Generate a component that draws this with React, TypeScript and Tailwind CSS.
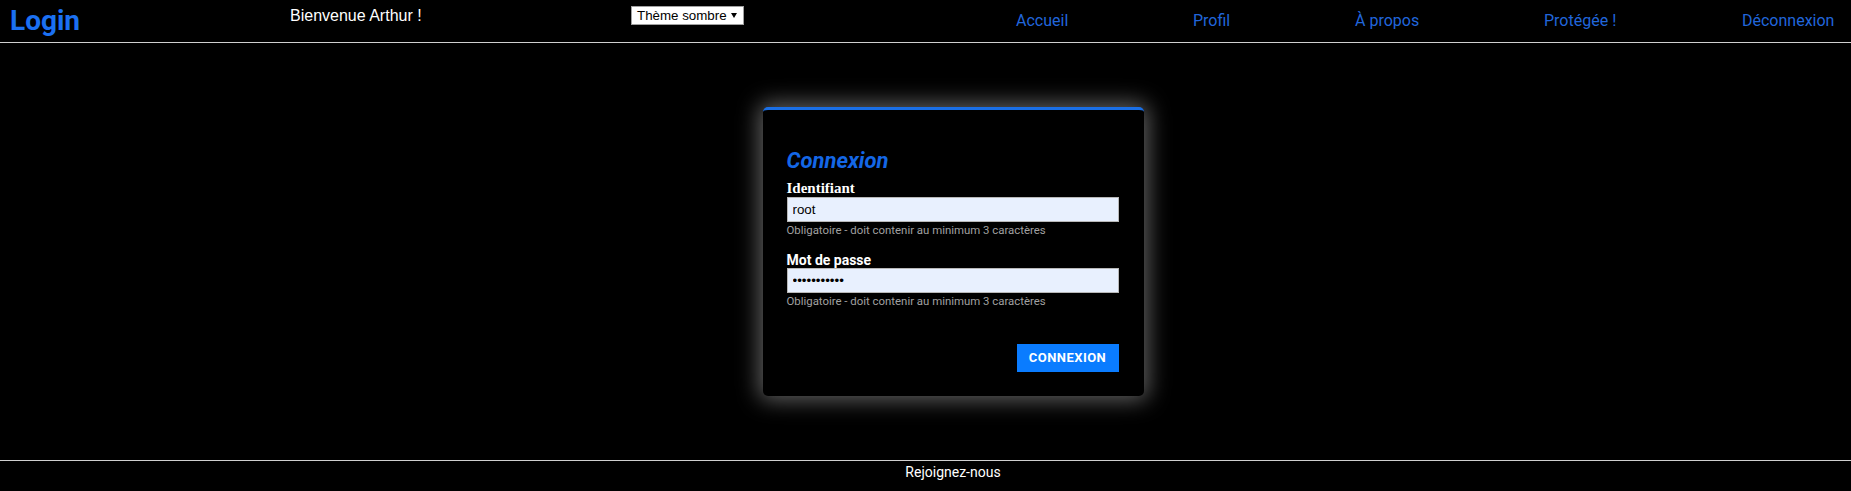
import { useState } from 'react';

const navLinks = [
  { label: 'Accueil', width: 'w-[177px]' },
  { label: 'Profil', width: 'w-[162px]' },
  { label: 'À propos', width: 'w-[189px]' },
  { label: 'Protégée !', width: 'w-[198px]' },
  { label: 'Déconnexion', width: '' },
];

const hint = 'Obligatoire - doit contenir au minimum 3 caractères';

export default function App() {
  const [login, setLogin] = useState('root');
  const [password, setPassword] = useState('12345678901');

  return (
    <div className="h-[491px] overflow-hidden bg-black flex flex-col font-['Roboto',sans-serif]">
      {/* header */}
      <header className="h-[43px] shrink-0 border-b border-[#d0d0d0] flex items-start">
        <div className="w-[290px] pl-[10px] pt-[6px] text-[28px] leading-[30px] font-bold text-[#1b70f2]">
          Login
        </div>
        <div className="w-[341px] pt-[7px] text-[16px] leading-[18px] text-white font-['Liberation_Sans',sans-serif]">
          Bienvenue Arthur !
        </div>
        <div className="mt-[6px] w-[113px] h-[19px] bg-white border border-[#a0a0a0] flex items-center pl-[5px] pr-[6px] justify-between">
          <span className="text-[13.33px] leading-none text-black font-['Liberation_Sans',sans-serif]">Thème sombre</span>
          <svg width="6" height="5" viewBox="0 0 6 5" className="mt-[-1px]">
            <path d="M0 0 H6 L3 5 Z" fill="#000" />
          </svg>
        </div>
        <nav className="ml-[272px] flex pt-[11px]">
          {navLinks.map((l) => (
            <a key={l.label} href="#" className={`${l.width} text-[16px] leading-[20px] text-[#2166db]`}>
              {l.label}
            </a>
          ))}
        </nav>
      </header>

      {/* main */}
      <main className="flex-1 pl-[55px] flex justify-center items-start">
        <form
          onSubmit={(e) => e.preventDefault()}
          className="mt-[64px] w-[381px] bg-black rounded-[5px] border-t-[3px] border-[#1a6fe6] shadow-[0_0_22px_4px_rgba(255,255,255,0.38)] pl-6 pr-[25px] pt-[38px] pb-6 flex flex-col"
        >
          <h2 className="text-[22px] leading-[26px] font-bold italic text-[#1467e6]">Connexion</h2>

          <label className="mt-[5px] text-[15px] leading-[18px] font-bold text-white font-['Liberation_Serif',serif]">
            Identifiant
          </label>
          <input
            type="text"
            value={login}
            onChange={(e) => setLogin(e.target.value)}
            className="h-[25px] w-full bg-[#e8f0fe] border border-[#b8b8b8] px-[5px] text-[13.33px] text-black outline-none font-['Liberation_Sans',sans-serif]"
          />
          <p className="mt-px text-[11.4px] leading-[14px] text-[#a0a0a0]">{hint}</p>

          <label className="mt-[15px] text-[14px] leading-[16px] font-bold text-white">Mot de passe</label>
          <input
            type="password"
            value={password}
            onChange={(e) => setPassword(e.target.value)}
            className="h-[25px] w-full bg-[#e8f0fe] border border-[#b8b8b8] px-[5px] text-[13.33px] text-black outline-none font-['Liberation_Sans',sans-serif]"
          />
          <p className="mt-px text-[11.4px] leading-[14px] text-[#a0a0a0]">{hint}</p>

          <div className="mt-[36px] flex justify-end">
            <button
              type="submit"
              className="h-[28px] w-[102px] bg-[#0a7cff] text-white text-[13px] font-bold tracking-[0.45px]"
            >
              CONNEXION
            </button>
          </div>
        </form>
      </main>

      {/* footer */}
      <footer className="h-[31px] shrink-0 border-t border-[#d0d0d0] pl-[55px] pt-[1px] text-center text-[14px] leading-[20px] text-white">
        Rejoignez-nous
      </footer>
    </div>
  );
}
